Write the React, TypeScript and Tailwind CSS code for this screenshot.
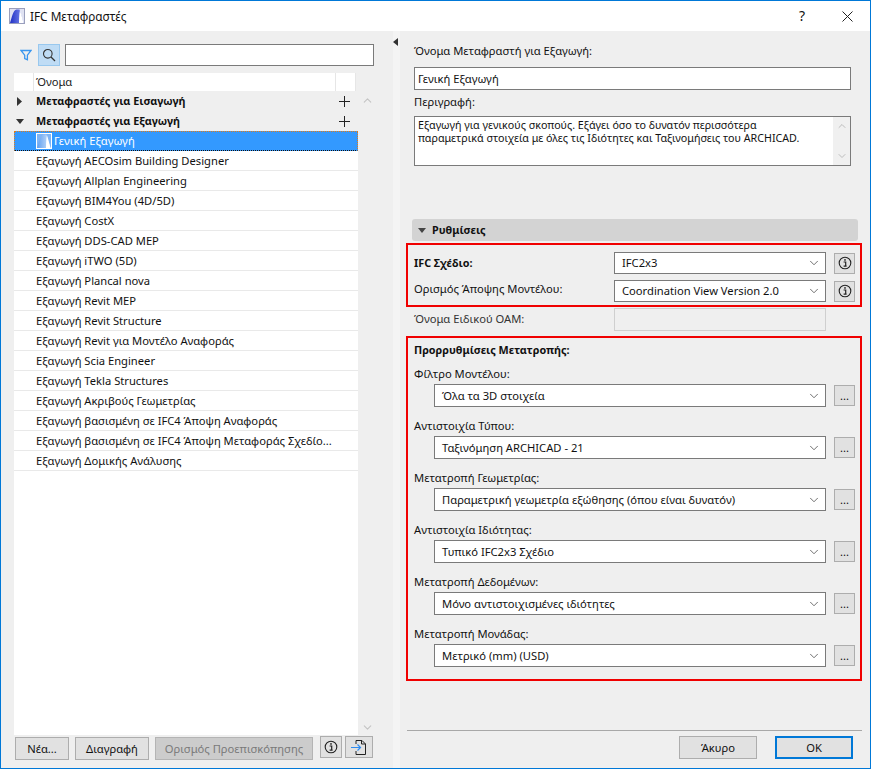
import React from 'react';
import { ChevronDown, ChevronUp } from 'lucide-react';

const items = [
  'Εξαγωγή AECOsim Building Designer',
  'Εξαγωγή Allplan Engineering',
  'Εξαγωγή BIM4You (4D/5D)',
  'Εξαγωγή CostX',
  'Εξαγωγή DDS-CAD MEP',
  'Εξαγωγή iTWO (5D)',
  'Εξαγωγή Plancal nova',
  'Εξαγωγή Revit MEP',
  'Εξαγωγή Revit Structure',
  'Εξαγωγή Revit για Μοντέλο Αναφοράς',
  'Εξαγωγή Scia Engineer',
  'Εξαγωγή Tekla Structures',
  'Εξαγωγή Ακριβούς Γεωμετρίας',
  'Εξαγωγή βασισμένη σε IFC4 Άποψη Αναφοράς',
  'Εξαγωγή βασισμένη σε IFC4 Άποψη Μεταφοράς Σχεδίο...',
  'Εξαγωγή Δομικής Ανάλυσης',
];

const presets = [
  { label: 'Φίλτρο Μοντέλου:', value: 'Όλα τα 3D στοιχεία' },
  { label: 'Αντιστοιχία Τύπου:', value: 'Ταξινόμηση ARCHICAD - 21' },
  { label: 'Μετατροπή Γεωμετρίας:', value: 'Παραμετρική γεωμετρία εξώθησης (όπου είναι δυνατόν)' },
  { label: 'Αντιστοιχία Ιδιότητας:', value: 'Τυπικό IFC2x3 Σχέδιο' },
  { label: 'Μετατροπή Δεδομένων:', value: 'Μόνο αντιστοιχισμένες ιδιότητες' },
  { label: 'Μετατροπή Μονάδας:', value: 'Μετρικό (mm) (USD)' },
];

const Logo = ({ light = false }: { light?: boolean }) => (
  <svg width="16" height="16" viewBox="0 0 16 16" className="shrink-0">
    <defs>
      <linearGradient id={light ? 'logoLight' : 'logoDark'} x1="0" x2="1" y1="0" y2="0">
        <stop offset="0" stopColor={light ? '#5f9ff0' : '#1f2fc4'} />
        <stop offset="1" stopColor={light ? '#cfe3fb' : '#7f8ff0'} />
      </linearGradient>
    </defs>
    <rect x="0.5" y="0.5" width="15" height="15" fill={light ? '#7fb4f4' : '#dfe2f2'} stroke={light ? '#ffffff' : '#9a9fbc'} />
    <path d="M1 15 C3 9 4 2 7.5 1.5 L10.5 1.5 C12 6 13 11 14.5 15 Z" fill={`url(#${light ? 'logoLight' : 'logoDark'})`} />
    <path d="M10 15 C10 9 10.5 4 11 2.5 C12.5 7 13.5 11 14.5 15 Z" fill="#ffffff" />
  </svg>
);

const InfoIcon = () => (
  <svg width="14" height="14" viewBox="0 0 14 14" fill="none">
    <circle cx="7" cy="7" r="5.8" stroke="#222" strokeWidth="1.1" />
    <rect x="6.2" y="3.2" width="1.6" height="1.5" fill="#222" />
    <path d="M5.6 6h2.1v4M5.6 10.2h3" stroke="#222" strokeWidth="1.2" />
  </svg>
);

const Plus = () => (
  <svg width="11" height="11" viewBox="0 0 11 11">
    <path d="M5.5 0v11M0 5.5h11" stroke="#222" strokeWidth="1" />
  </svg>
);

const SelectBox = ({ value, className }: { value: string; className: string }) => (
  <div className={`flex items-center justify-between border border-[#7a7a7a] bg-white pl-[7px] pr-[4px] ${className}`}>
    <span>{value}</span>
    <ChevronDown size={14} strokeWidth={1.3} className="text-[#444]" />
  </div>
);

const SmallBtn = ({ children }: { children: React.ReactNode }) => (
  <div className="flex h-[21px] w-[21px] shrink-0 items-center justify-center border border-[#adadad] bg-[#e1e1e1]">{children}</div>
);

const Btn = ({ children, className }: { children: React.ReactNode; className: string }) => (
  <div className={`flex h-[23px] items-center justify-center ${className}`}>{children}</div>
);

export default function App() {
  return (
    <div
      className="flex h-[769px] w-[871px] flex-col overflow-hidden border border-[#0078d7] bg-[#efefef] text-[11.2px] leading-[14px] text-[#111]"
      style={{ fontFamily: '"Noto Sans", "Open Sans", sans-serif' }}
    >
      {/* title bar */}
      <div className="flex h-[30px] shrink-0 items-center bg-white pl-[8px]">
        <Logo />
        <span className="ml-[5px] text-[11.8px]">IFC Μεταφραστές</span>
        <span className="ml-auto mr-[37px] text-[14px]">?</span>
        <svg width="11" height="11" viewBox="0 0 11 11" className="mr-[17px]">
          <path d="M0.5 0.5l10 10M10.5 0.5l-10 10" stroke="#222" strokeWidth="1" />
        </svg>
      </div>

      <div className="flex min-h-0 flex-1">
        {/* left pane */}
        <div className="flex w-[392px] shrink-0 flex-col pl-[13px] pt-[13px]">
          <div className="flex h-[22px] items-center">
            <svg width="12" height="12" viewBox="0 0 12 12" fill="none" className="ml-[6px]">
              <path d="M1 1.5h10L7.4 6.2v4.6L4.7 9.5V6.2Z" stroke="#3a96ee" strokeWidth="1.3" />
            </svg>
            <div className="ml-[6px] flex h-[22px] w-[22px] items-center justify-center border border-[#99c8ee] bg-[#bfdcf5]">
              <svg width="14" height="14" viewBox="0 0 14 14" fill="none">
                <circle cx="5.8" cy="5.8" r="4.3" stroke="#333" strokeWidth="1.1" />
                <path d="M9 9l4 4" stroke="#333" strokeWidth="1.3" />
              </svg>
            </div>
            <div className="ml-[5px] h-[22px] w-[309px] border border-[#7a7a7a] bg-white" />
          </div>

          <div className="mt-[7px] flex min-h-0 flex-1">
            <div className="flex w-[344px] flex-col bg-white">
              <div className="flex h-[18px] shrink-0">
                <div className="w-[20px] border-r border-[#e6e6e6]" />
                <div className="flex-1 border-r border-[#e6e6e6] pl-[2px] leading-[18px] text-[#222]">Όνομα</div>
                <div className="w-[20px] border-r border-[#e6e6e6]" />
                <div className="w-[2px] bg-[#efefef]" />
              </div>
              <div className="flex h-[20px] shrink-0 items-center bg-[#efefef] text-[10.8px] font-bold">
                <svg width="5" height="9" viewBox="0 0 5 9" className="ml-[3px]"><path d="M0 0l5 4.5L0 9Z" fill="#333" /></svg>
                <span className="ml-[14px]">Μεταφραστές για Εισαγωγή</span>
                <span className="ml-auto mr-[8px] flex"><Plus /></span>
              </div>
              <div className="flex h-[20px] shrink-0 items-center bg-[#efefef] text-[10.8px] font-bold">
                <svg width="8" height="5" viewBox="0 0 8 5" className="ml-[2px]"><path d="M0 0h8L4 5Z" fill="#333" /></svg>
                <span className="ml-[12px]">Μεταφραστές για Εξαγωγή</span>
                <span className="ml-auto mr-[8px] flex"><Plus /></span>
              </div>
              <div className="flex h-[20px] shrink-0 items-center border-x border-t border-b border-dotted border-x-[#e07b1a] border-t-[#e07b1a] border-b-[#111] bg-[#3399ff] pl-[21px] text-white">
                <Logo light />
                <span className="ml-[2px]">Γενική Εξαγωγή</span>
              </div>
              {items.map((item) => (
                <div key={item} className="h-[20px] shrink-0 border-b border-[#e9e9e9] pl-[22px] leading-[19px]">
                  {item}
                </div>
              ))}
            </div>
            <div className="flex w-[19px] flex-col items-center justify-between pb-[1px] pt-[21px] text-[#c4c4c4]">
              <ChevronUp size={13} strokeWidth={2} />
              <ChevronDown size={13} strokeWidth={2} />
            </div>
          </div>

          <div className="flex h-[33px] shrink-0 items-start pl-[1px] pt-[2px]">
            <Btn className="w-[54px] border border-[#adadad] bg-[#e1e1e1]">Νέα...</Btn>
            <Btn className="ml-[6px] w-[74px] border border-[#adadad] bg-[#e1e1e1]">Διαγραφή</Btn>
            <Btn className="ml-[6px] w-[158px] border border-[#b4b4b4] bg-[#cccccc] text-[#7a7a7a]">Ορισμός Προεπισκόπησης</Btn>
            <div className="ml-[7px] -mt-[1px] flex h-[22px] w-[22px] items-center justify-center border border-[#adadad] bg-[#e1e1e1]"><InfoIcon /></div>
            <div className="ml-[3px] -mt-[1px] flex h-[22px] w-[28px] items-center justify-center border border-[#adadad] bg-[#e1e1e1]">
              <svg width="16" height="15" viewBox="0 0 16 15" fill="none">
                <path d="M5 4V0.5h6l3.5 3.5v10.5H5V11" stroke="#222" strokeWidth="1" />
                <path d="M10.5 0.5V4h4" stroke="#222" strokeWidth="1" />
                <path d="M0 7.5h9M6.5 4.5l3 3-3 3" stroke="#2f8cf0" strokeWidth="1.2" />
              </svg>
            </div>
          </div>
        </div>

        {/* splitter */}
        <div className="relative w-[7px] shrink-0 bg-[#f4f4f4]">
          <svg width="5" height="8" viewBox="0 0 5 8" className="absolute left-0 top-[7px]"><path d="M5 0v8L0 4Z" fill="#333" /></svg>
        </div>

        {/* right pane */}
        <div className="flex min-w-0 flex-1 flex-col pl-[6px] pr-[8px]">
          <div className="flex flex-col pl-[8px] pr-[11px]">
            <div className="mt-[13px] h-[14px]">Όνομα Μεταφραστή για Εξαγωγή:</div>
            <div className="mt-[9px] flex h-[23px] items-center border border-[#7a7a7a] bg-white pl-[3px]">Γενική Εξαγωγή</div>
            <div className="mt-[5px] h-[14px]">Περιγραφή:</div>
            <div className="mt-[7px] flex h-[50px] border border-[#7a7a7a] bg-white">
              <div className="flex-1 pl-[3px] pt-[2px] text-[10.7px] leading-[13px]">
                Εξαγωγή για γενικούς σκοπούς. Εξάγει όσο το δυνατόν περισσότερα
                <br />
                παραμετρικά στοιχεία με όλες τις Ιδιότητες και Ταξινομήσεις του ARCHICAD.
              </div>
              <div className="flex w-[17px] flex-col items-center justify-between bg-[#f0f0f0] py-[3px] text-[#bdbdbd]">
                <ChevronUp size={12} strokeWidth={2} />
                <ChevronDown size={12} strokeWidth={2} />
              </div>
            </div>
          </div>

          <div className="ml-[6px] mr-[4px] mt-[53px] flex h-[22px] items-center rounded-[3px] bg-[#d3d3d3] pl-[6px] text-[10.8px] font-bold">
            <svg width="8" height="5" viewBox="0 0 8 5"><path d="M0 0h8L4 5Z" fill="#444" /></svg>
            <span className="ml-[6px]">Ρυθμίσεις</span>
          </div>

          <div className="mt-[2px] flex h-[64px] flex-col gap-[6px] border-2 border-[#f00000] pl-[6px] pr-[5px] pt-[7px]">
            <div className="flex items-center">
              <span className="w-[200px] text-[10.8px] font-bold">IFC Σχέδιο:</span>
              <SelectBox value="IFC2x3" className="h-[22px] w-[212px]" />
              <span className="ml-auto flex"><SmallBtn><InfoIcon /></SmallBtn></span>
            </div>
            <div className="flex items-center">
              <span className="-mt-[4px] w-[200px]">Ορισμός Άποψης Μοντέλου:</span>
              <SelectBox value="Coordination View Version 2.0" className="h-[22px] w-[212px]" />
              <span className="ml-auto flex"><SmallBtn><InfoIcon /></SmallBtn></span>
            </div>
          </div>

          <div className="flex h-[29px] items-start pl-[8px] pt-[1px]">
            <span className="mt-[4px] w-[200px] text-[#333]">Όνομα Ειδικού ΟΑΜ:</span>
            <div className="h-[23px] w-[212px] border border-[#cfcfcf] bg-[#efefef]" />
          </div>

          <div className="flex h-[345px] flex-col border-2 border-[#f00000] pl-[6px] pr-[5px] pt-[5px]">
            <div className="h-[14px] text-[10.8px] font-bold">Προρρυθμίσεις Μετατροπής:</div>
            {presets.map((p, i) => (
              <div key={p.label} className={i === 0 ? 'mt-[10px]' : 'mt-[12px]'}>
                <div className="h-[14px]">{p.label}</div>
                <div className="mt-[3px] flex items-center">
                  <SelectBox value={p.value} className="ml-[20px] h-[23px] w-[392px]" />
                  <span className="ml-auto flex">
                    <SmallBtn><span className="leading-[10px]">...</span></SmallBtn>
                  </span>
                </div>
              </div>
            ))}
          </div>

          <div className="mt-[49px] ml-[1px] border-t border-[#a8a8a8]" />
          <div className="mt-[5px] flex justify-end pr-[9px]">
            <Btn className="w-[78px] border border-[#adadad] bg-[#e1e1e1]">Άκυρο</Btn>
            <Btn className="ml-[18px] w-[78px] border-2 border-[#0078d7] bg-[#e1e1e1]">ΟΚ</Btn>
          </div>
        </div>
      </div>
    </div>
  );
}
